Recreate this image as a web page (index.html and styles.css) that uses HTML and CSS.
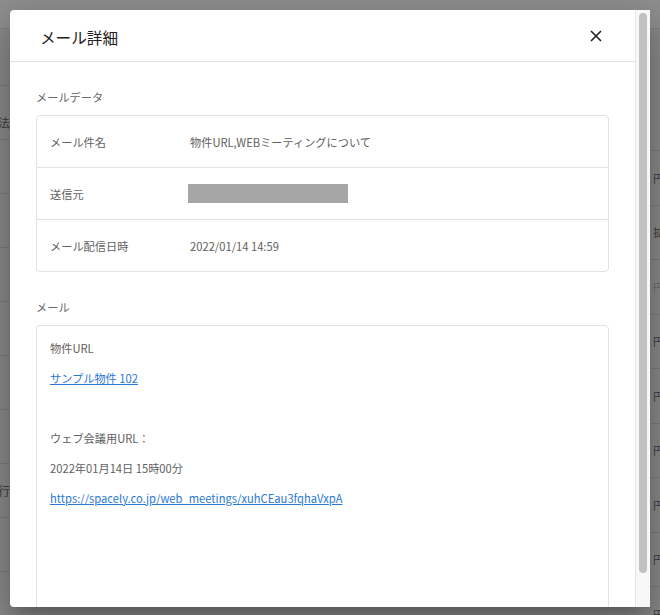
FILE: index.html
```html
<!DOCTYPE html>
<html lang="ja">
<head>
<meta charset="utf-8">
<title>メール詳細</title>
<link rel="stylesheet" href="styles.css">
</head>
<body>
<div class="page">
  <div class="bg-top"></div>
  <div class="bg-body">
    <div class="bg-col bg-left">
      <div class="bg-row bg-first"></div>
      <div class="bg-row"><span class="bg-text">支払方法</span></div>
      <div class="bg-row"></div>
      <div class="bg-row"></div>
      <div class="bg-row"></div>
      <div class="bg-row"></div>
      <div class="bg-row"></div>
      <div class="bg-row"></div>
      <div class="bg-row bg-mid"><span class="bg-text">請求発行</span></div>
      <div class="bg-row"></div>
    </div>
    <div class="bg-col bg-right">
      <div class="bg-rhead"></div>
      <div class="bg-rrow"><span>円</span></div>
      <div class="bg-rrow"><span>拡</span></div>
      <div class="bg-rrow"><span class="faint">円</span></div>
      <div class="bg-rrow"><span>円</span></div>
      <div class="bg-rrow"><span>円</span></div>
      <div class="bg-rrow"><span>円</span></div>
      <div class="bg-rrow"><span>円</span></div>
      <div class="bg-rrow"><span>円</span></div>
      <div class="bg-rrow"><span>円</span></div>
    </div>
  </div>

  <div class="dialog">
    <div class="dialog-main">
      <div class="dialog-header">
        <h1 class="dialog-title">メール詳細</h1>
        <button class="close-btn" aria-label="閉じる">
          <svg width="12" height="12" viewBox="0 0 12 12"><path d="M1 1L11 11M11 1L1 11" stroke="#222" stroke-width="1.6" fill="none"/></svg>
        </button>
      </div>
      <div class="dialog-body">
        <div class="section-label">メールデータ</div>
        <div class="data-card">
          <div class="data-row">
            <div class="data-key">メール件名</div>
            <div class="data-val">物件URL,WEBミーティングについて</div>
          </div>
          <div class="data-row">
            <div class="data-key">送信元</div>
            <div class="data-val"><span class="redacted"></span></div>
          </div>
          <div class="data-row">
            <div class="data-key">メール配信日時</div>
            <div class="data-val">2022/01/14 14:59</div>
          </div>
        </div>

        <div class="section-label">メール</div>
        <div class="mail-box">
          <p>物件URL</p>
          <p><a href="#">サンプル物件 102</a></p>
          <p>&nbsp;</p>
          <p>ウェブ会議用URL：</p>
          <p>2022年01月14日 15時00分</p>
          <p><a href="#">https://spacely.co.jp/web_meetings/xuhCEau3fqhaVxpA</a></p>
        </div>
      </div>
    </div>
    <div class="scrollbar"><div class="thumb"></div></div>
  </div>
</div>
</body>
</html>
```

FILE: styles.css
```css
* { box-sizing: border-box; }
html, body { margin: 0; padding: 0; }
body {
  width: 660px;
  height: 615px;
  overflow: hidden;
  font-family: "Noto Sans CJK JP", "Noto Sans", sans-serif;
  background: #8b8b8b;
}
.page {
  position: relative;
  width: 660px;
  height: 615px;
  overflow: hidden;
  background: #8a8a8a;
}

/* dimmed background page */
.bg-top {
  height: 29px;
  background: #8f8f8f;
  border-bottom: 1px solid #828282;
}
.bg-body {
  display: flex;
  justify-content: space-between;
}
.bg-col { width: 330px; }
.bg-row {
  height: 54px;
  border-bottom: 1px solid #7c7c7c;
  display: flex;
  align-items: flex-end;
  padding-bottom: 8px;
}
.bg-row.bg-first { height: 57px; }
.bg-row.bg-mid { align-items: center; padding-bottom: 0; }
.bg-text {
  margin-left: -38px;
  font-size: 12px;
  color: #3e3e3e;
}
.bg-rhead {
  height: 122px;
  border-bottom: 1px solid #7c7c7c;
}
.bg-rrow {
  height: 54.5px;
  border-bottom: 1px solid #7c7c7c;
  display: flex;
  align-items: center;
  justify-content: flex-end;
}
.bg-rrow span {
  font-size: 11px;
  color: #3e3e3e;
  margin-right: -4px;
}
.bg-rrow span.faint { color: #6a6a6a; }

/* dialog */
.dialog {
  position: absolute;
  left: 10px;
  top: 10px;
  width: 640px;
  height: 597px;
  display: flex;
  background: #fff;
  border-radius: 4px 0 0 4px;
  overflow: hidden;
  box-shadow: 0 11px 15px -7px rgba(0,0,0,.2), 0 24px 38px 3px rgba(0,0,0,.14), 0 9px 46px 8px rgba(0,0,0,.12);
}
.dialog-main {
  flex: 1;
  min-width: 0;
}
.dialog-header {
  height: 52px;
  padding: 3px 33px 0 30px;
  display: flex;
  align-items: center;
  justify-content: space-between;
  border-bottom: 1px solid #e2e2e2;
}
.dialog-title {
  margin: 0;
  font-size: 15.6px;
  font-weight: 400;
  color: #212121;
  line-height: 20px;
}
.close-btn {
  border: 0;
  background: none;
  padding: 0;
  width: 12px;
  height: 12px;
  margin-top: -3px;
  display: block;
  cursor: pointer;
}
.close-btn svg { display: block; }

.dialog-body {
  padding: 0 26px;
}
.section-label {
  margin-top: 26px;
  margin-bottom: 9px;
  font-size: 11.2px;
  line-height: 18px;
  color: #666;
}
.data-card {
  border: 1px solid #e2e2e2;
  border-radius: 4px;
}
.data-row {
  display: flex;
  align-items: center;
  height: 52px;
  padding-left: 13px;
  border-top: 1px solid #e2e2e2;
  font-size: 11.2px;
  color: #616161;
}
.data-row:first-child {
  border-top: 0;
  height: 51px;
}
.data-key { width: 140px; flex: none; }
.data-val { color: #616161; }
.redacted {
  display: block;
  width: 160px;
  height: 19px;
  margin-left: -2px;
  background: #a6a6a6;
}

.mail-box {
  border: 1px solid #e2e2e2;
  border-radius: 4px;
  min-height: 420px;
  padding: 7px 13px;
}
.mail-box p {
  margin: 0;
  font-size: 11.2px;
  line-height: 30px;
  color: #616161;
}
.mail-box a {
  color: #2a78d6;
  text-decoration: underline;
}

/* scrollbar */
.scrollbar {
  width: 15px;
  flex: none;
  background: #f8f8f8;
  border-left: 1px solid #e6e6e6;
  padding: 3px 3px 0 3px;
}
.thumb {
  width: 8px;
  height: 560px;
  border-radius: 4px;
  background: #c2c2c2;
}
```
